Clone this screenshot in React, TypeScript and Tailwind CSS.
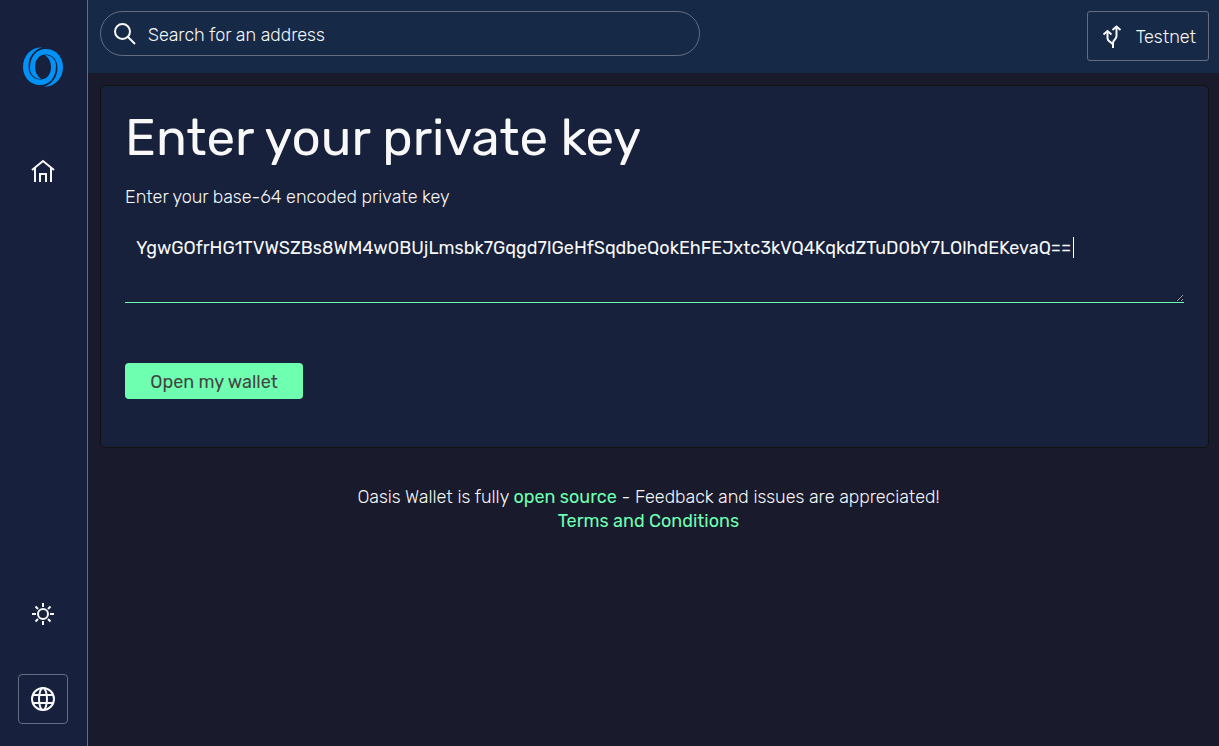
import type { ReactNode } from 'react'

const PRIVATE_KEY = 'YgwGOfrHG1TVWSZBs8WM4w0BUjLmsbk7Gqgd7IGeHfSqdbeQokEhFEJxtc3kVQ4KqkdZTuD0bY7LOlhdEKevaQ=='

function Icon({ children }: { children: ReactNode }) {
  return (
    <svg viewBox="0 0 24 24" className="size-6 shrink-0" fill="none" stroke="currentColor" strokeWidth="2" aria-hidden="true">
      {children}
    </svg>
  )
}

function Logo() {
  const hook =
    'M19 .3C8 0 0 9 0 20c0 10 7 18 17 18s16-8 16-19C33 13 29 8 22 8c4 3 6 7 6 12 0 7-4 12.500-10.500 12.500C9 32.500 5.500 26 5.500 19 5.500 10 11 3 19 .3Z'
  return (
    <svg viewBox="0 0 40 40" className="size-10" fill="#0092f6" aria-hidden="true">
      <path d={hook} />
      <path d={hook} transform="rotate(180 20 20)" />
    </svg>
  )
}

export default function App() {
  return (
    <div className="flex min-h-screen bg-[#1a1a2d] font-['Rubik','Roboto',sans-serif] text-lg leading-6 font-light text-[#f8f8f8]">
      <aside className="flex w-22 shrink-0 flex-col items-center justify-between border-r border-[#646d81] bg-[#17213d] pt-[47px] pr-px pb-[22px]">
        <div className="flex flex-col items-center gap-[72px]">
          <a href="#home" aria-label="Oasis Wallet">
            <Logo />
          </a>
          <a href="#home" aria-label="Home">
            <Icon>
              <path d="m1 11 11-9 11 9M4 9v14M20 9v14M9 23v-8h6v8" />
            </Icon>
          </a>
        </div>
        <div className="flex flex-col items-center gap-12">
          <button type="button" aria-label="Light mode">
            <Icon>
              <circle cx="12" cy="12" r="5" />
              <path d="M12 1v4M12 19v4M1 12h4M19 12h4M4.500 4.500l2.500 2.500M17 17l2.500 2.500M19.500 4.500L17 7M7 17l-2.500 2.500" />
            </Icon>
          </button>
          <button type="button" aria-label="Language" className="rounded border border-[#646d81] p-3">
            <Icon>
              <circle cx="12" cy="12" r="11" />
              <ellipse cx="12" cy="12" rx="4" ry="11" />
              <path d="M2 8h20M2 16h20" />
            </Icon>
          </button>
        </div>
      </aside>

      <div className="flex min-w-0 flex-1 flex-col">
        <header className="flex items-start justify-between bg-[#162a48] pt-[11px] pr-[10px] pb-3 pl-3">
          <label className="flex h-[45px] w-[600px] items-center gap-[11px] rounded-full border border-[#646d81] px-3">
            <Icon>
              <circle cx="9.500" cy="9.500" r="7.500" />
              <path d="m15 15 7 7" />
            </Icon>
            <input
              type="search"
              aria-label="Search for an address"
              placeholder="Search for an address"
              className="min-w-0 flex-1 bg-transparent pt-0.5 outline-none placeholder:text-[#f8f8f8]"
            />
          </label>
          <button type="button" className="flex h-[50px] items-center gap-3 rounded-[3px] border border-[#646d81] px-3 pt-0.5">
            <Icon>
              <path d="M13 23v-5c0-3 3.500-3.500 3.500-7V1.500M13 20c0-3-5.500-3-5.500-6.500V6" />
              <path d="M12.500 5l4-3.500 4 3.500M3.500 9.500l4-3.500 4 3.500" />
            </Icon>
            Testnet
          </button>
        </header>

        <main className="pt-3 pr-[10px] pl-3">
          <form className="rounded-[5px] border border-[#111111] bg-[#17213c] px-6 pt-6 pb-12" onSubmit={event => event.preventDefault()}>
            <h1 className="text-[51px] leading-14 font-normal">Enter your private key</h1>
            <label htmlFor="private-key" className="mt-[19px] block">
              Enter your base-64 encoded private key
            </label>
            <div className="relative mt-4">
              <textarea
                id="private-key"
                defaultValue={PRIVATE_KEY}
                spellCheck={false}
                className="peer block h-[78px] w-full border-b border-b-[#6fffb0] bg-transparent px-[11px] py-3 leading-[22px] font-normal outline-none"
              />
              <span className="pointer-events-none absolute top-3 left-[948px] h-[21px] w-px bg-white peer-focus:hidden" aria-hidden="true" />
            </div>
            <button type="submit" className="mt-[60px] h-9 min-w-[178px] rounded bg-[#6fffb0] px-6 pt-0.5 font-normal text-[#444444]">
              Open my wallet
            </button>
          </form>
        </main>

        <footer className="px-3 pt-[37px] pr-[22px] text-center">
          <p>
            Oasis Wallet is fully{' '}
            <a href="#source" className="font-normal text-[#6fffb0]">
              open source
            </a>{' '}
            - Feedback and issues are appreciated!
          </p>
          <a href="#terms" className="font-normal text-[#6fffb0]">
            Terms and Conditions
          </a>
        </footer>
      </div>
    </div>
  )
}
